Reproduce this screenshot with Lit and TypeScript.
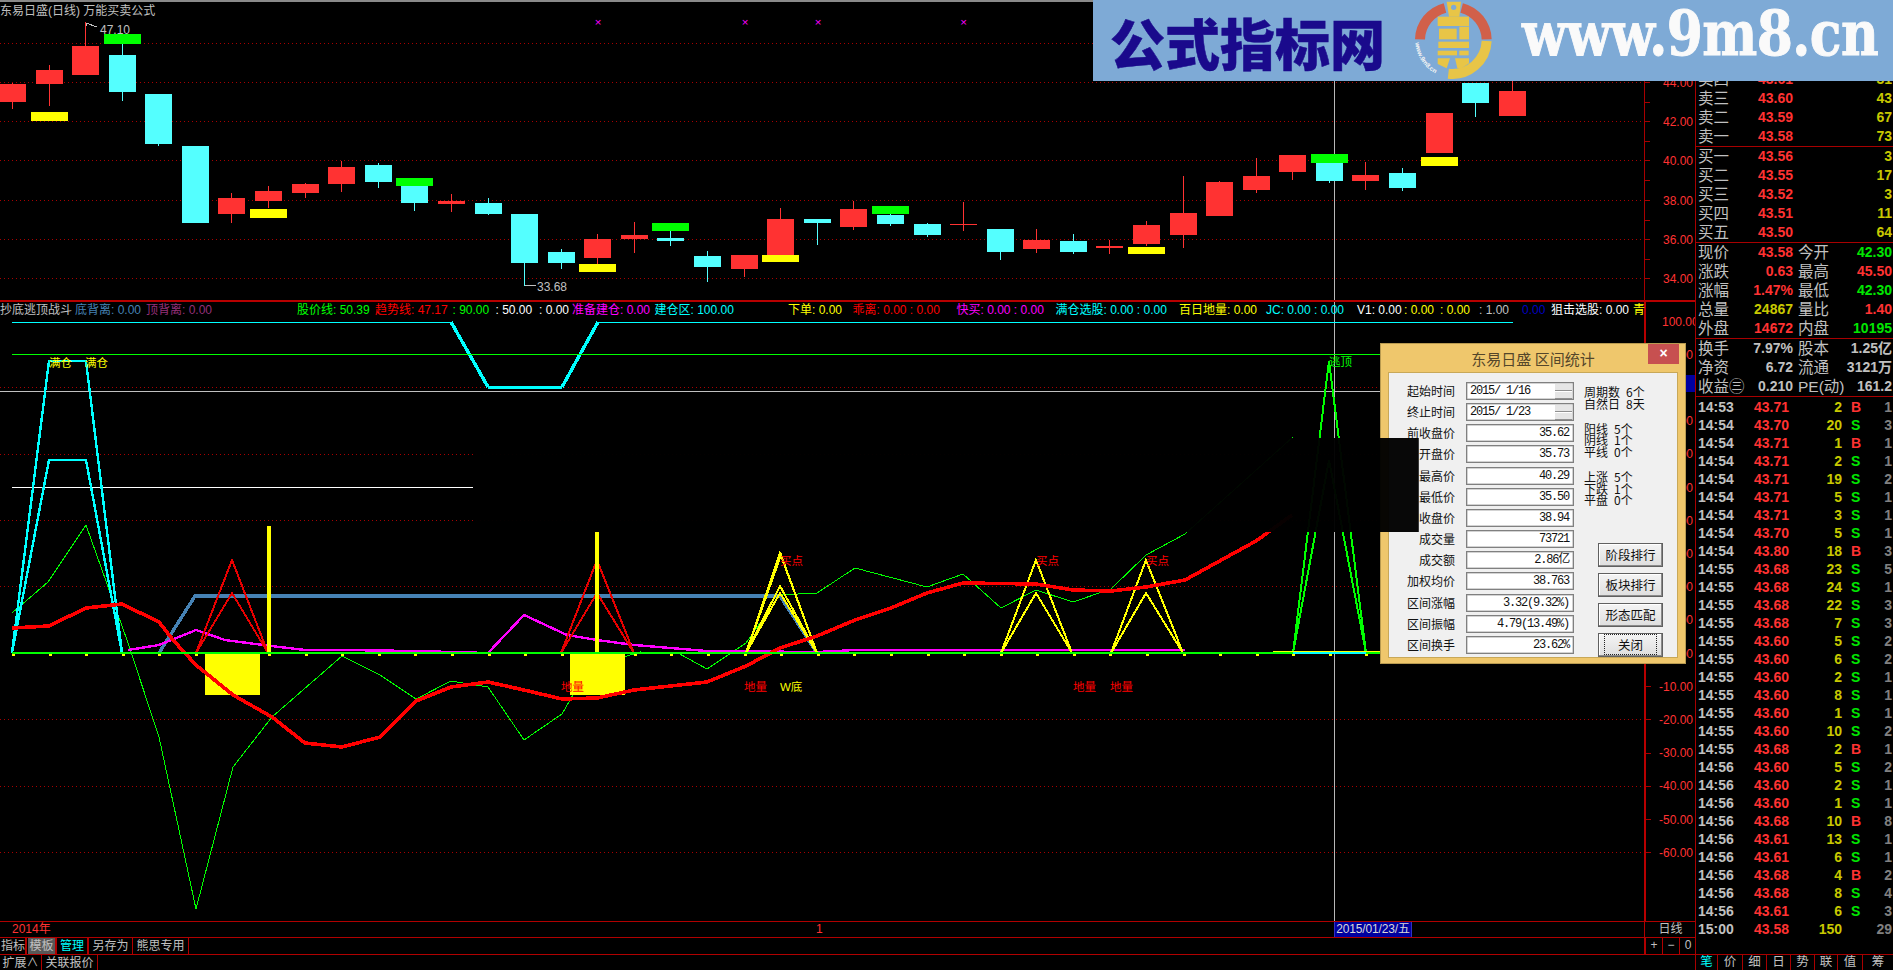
import { LitElement, html, css, svg } from "lit";
import { customElement } from "lit/decorators.js";

const RED = "#ff3232";
const CY = "#54ffff";
const YE = "#ffff00";
const GR = "#00ff00";
const px = (i: number) => Math.floor(12.5 + 36.58 * i) + 0.5;

// [index, wickTop, bodyTop, bodyBottom, wickBottom, up?]
const candles: [number, number, number, number, number, boolean][] = [
  [0, 83, 84, 102, 109, true], [1, 65, 70, 84, 106, true], [2, 22, 46, 75, 75, true],
  [3, 44, 55, 92, 101, false], [4, 94, 94, 144, 146, false], [5, 146, 146, 223, 223, false],
  [6, 193, 198, 214, 223, true], [7, 186, 191, 201, 208, true], [8, 183, 184, 193, 198, true],
  [9, 161, 167, 184, 192, true], [10, 163, 165, 182, 188, false], [11, 186, 186, 203, 211, false],
  [12, 194, 201, 204, 212, true], [13, 198, 203, 214, 215, false], [14, 214, 214, 263, 286, false],
  [15, 249, 252, 263, 269, false], [16, 234, 239, 258, 264, true], [17, 222, 235, 239, 253, true],
  [18, 231, 238, 241, 246, false], [19, 251, 256, 267, 282, false], [20, 255, 255, 269, 277, true],
  [21, 208, 219, 255, 255, true], [22, 219, 219, 223, 245, false], [23, 201, 209, 227, 230, true],
  [24, 214, 215, 224, 226, false], [25, 223, 224, 235, 237, false], [26, 202, 224, 225, 231, true],
  [27, 229, 229, 252, 260, false], [28, 229, 240, 249, 253, true], [29, 234, 241, 252, 254, false],
  [30, 240, 246, 248, 254, true], [31, 221, 225, 244, 246, true], [32, 176, 213, 235, 248, true],
  [33, 181, 182, 216, 216, true], [34, 158, 176, 190, 193, true], [35, 155, 155, 172, 180, true],
  [36, 163, 163, 181, 183, false], [37, 162, 175, 181, 190, true], [38, 168, 173, 188, 191, false],
  [39, 113, 113, 153, 153, true], [40, 83, 83, 103, 117, false], [41, 81, 91, 116, 116, true],
];
// [index, top, bottom, color]
const flags: [number, number, number, string][] = [
  [1, 112, 121, YE], [3, 34, 44, GR], [7, 209, 218, YE], [11, 178, 186, GR], [16, 264, 272, YE],
  [18, 223, 231, GR], [21, 255, 262, YE], [24, 206, 214, GR], [31, 247, 254, YE], [36, 154, 163, GR], [39, 157, 166, YE],
];
const legend: [number, string, string][] = [
  [0, "抄底逃顶战斗", "#c0c0c0"], [75, "底背离: 0.00", "#4682b4"], [146, "顶背离: 0.00", "#96307a"],
  [297, "股价线: 50.39", GR], [375, "趋势线: 47.17", "#ff0000"], [452.5, ": 90.00", GR], [495.5, ": 50.00", "#ffffff"],
  [539, ": 0.00", "#ffffff"], [572, "准备建仓: 0.00", "#ff00ff"], [654.5, "建仓区: 100.00", "#00ffff"],
  [788, "下单: 0.00", YE], [852.5, "乖离: 0.00 : 0.00", "#ff0000"], [956.5, "快买: 0.00 : 0.00", "#ff00ff"],
  [1055.5, "满仓选股: 0.00 : 0.00", "#00ffff"], [1179, "百日地量: 0.00", YE], [1266, "JC: 0.00 : 0.00", "#00ffff"],
  [1357, "V1: 0.00", "#ffffff"], [1404, ": 0.00", YE], [1440, ": 0.00", YE], [1479, ": 1.00", "#c0c0c0"],
  [1522, "0.00", "#0000c0"], [1551, "狙击选股: 0.00", "#ffffff"], [1633, "青", YE],
];
const marks: [number, number, string, string][] = [
  [49, 362, "满仓", YE], [85, 362, "满仓", YE], [1329, 361, "逃顶", GR],
  [780, 560, "买点", "#ff0000"], [1036, 560, "买点", "#ff0000"], [1146, 560, "买点", "#ff0000"],
  [561, 686, "地量", "#ff0000"], [744, 686, "地量", "#ff0000"], [780, 686, "W底", YE],
  [1073, 686, "地量", "#ff0000"], [1110, 686, "地量", "#ff0000"],
];
const redLine = "12,628 49,626 86,608 122,604 159,622 173,640 196,665 233,695 272,717 305,743 342,747 380,737 416,701 451,687 488,682 524,690 562,699 597,698 634,690 707,682 746,666 780,648 817,636 855,620 891,608 927,593 963,583 1036,584 1073,590 1111,591 1146,587 1185,580 1256,541 1292,515";
const thinGreen = "12,613 48,582 86,525 127,640 159,737 196,909 233,767 272,717 342,656 380,675 416,699 451,681 488,687 524,740 562,714 597,653 624,657 640,652 678,653 707,669 746,643 780,595 817,593 855,568 927,587 963,574 1001,608 1036,590 1073,602 1111,589 1146,555 1185,534 1293,437";
const magenta = "128,650 159,645 196,630 225,640 263,645 305,650 342,650 416,651 488,653 524,615 567,635 597,640 634,645 670,648 707,651 817,652 855,650 1185,650";
const tris: [number, number, number, number, string][] = [
  [196, 232, 268, 560, "#e80000"], [196, 232, 268, 593, "#e80000"], [561, 597, 634, 560, "#e80000"], [561, 597, 634, 593, "#e80000"],
  [746, 780, 817, 553, YE], [746, 781, 817, 555, YE], [746, 780, 817, 586, YE], [746, 780, 817, 593, YE],
  [1001, 1036, 1072, 560, YE], [1001, 1036, 1072, 593, YE], [1111, 1146, 1183, 560, YE], [1111, 1146, 1183, 593, YE],
  [1293, 1329, 1366, 361, GR], [1293, 1329, 1366, 460, GR],
];
const grids = [43.5, 82.5, 121.5, 160.5, 200.5, 239.5, 278.5];
const lowGrid = [387.5, 454.5, 520.5, 586.5, 719.5, 786.5, 852.5];

const book = [
  ["卖五", "43.65", "109"], ["卖四", "43.61", "31"], ["卖三", "43.60", "43"], ["卖二", "43.59", "67"], ["卖一", "43.58", "73"],
];
const bids = [
  ["买一", "43.56", "3"], ["买二", "43.55", "17"], ["买三", "43.52", "3"], ["买四", "43.51", "11"], ["买五", "43.50", "64"],
];
const stats = [
  ["现价", "43.58", "r", "今开", "42.30", "g"], ["涨跌", "0.63", "r", "最高", "45.50", "r"], ["涨幅", "1.47%", "r", "最低", "42.30", "g"],
  ["总量", "24867", "y", "量比", "1.40", "r"], ["外盘", "14672", "r", "内盘", "10195", "g"],
];
const funds = [
  ["换手", "7.97%", "w", "股本", "1.25亿", "w"], ["净资", "6.72", "w", "流通", "3121万", "w"], ["收益㊂", "0.210", "w", "PE(动)", "161.2", "w"],
];
const ticks = `14:53 43.71 2 B 1|14:54 43.70 20 S 3|14:54 43.71 1 B 1|14:54 43.71 2 S 1|14:54 43.71 19 S 2|14:54 43.71 5 S 1|14:54 43.71 3 S 1|14:54 43.70 5 S 1|14:54 43.80 18 B 3|14:55 43.68 23 S 5|14:55 43.68 24 S 1|14:55 43.68 22 S 3|14:55 43.68 7 S 3|14:55 43.60 5 S 2|14:55 43.60 6 S 2|14:55 43.60 2 S 1|14:55 43.60 8 S 1|14:55 43.60 1 S 1|14:55 43.60 10 S 2|14:55 43.68 2 B 1|14:56 43.60 5 S 2|14:56 43.60 2 S 1|14:56 43.60 1 S 1|14:56 43.68 10 B 8|14:56 43.61 13 S 1|14:56 43.61 6 S 1|14:56 43.68 4 B 2|14:56 43.68 8 S 4|14:56 43.61 6 S 3|15:00 43.58 150 _ 29`
  .split("|").map((r) => r.split(" "));
const tabs = ["笔", "价", "细", "日", "势", "联", "值", "筹"];
const formRows: [string, string, boolean][] = [
  ["起始时间", "2015/ 1/16", true], ["终止时间", "2015/ 1/23", true], ["前收盘价", "35.62", false], ["开盘价", "35.73", false],
  ["最高价", "40.29", false], ["最低价", "35.50", false], ["收盘价", "38.94", false], ["成交量", "73721", false],
  ["成交额", "2.86亿", false], ["加权均价", "38.763", false], ["区间涨幅", "3.32(9.32%)", false], ["区间振幅", "4.79(13.49%)", false], ["区间换手", "23.62%", false],
];

@customElement("app-root")
export class AppRoot extends LitElement {
  static styles = css`
    :host {
      display: block;
      position: relative;
      width: 1893px;
      height: 970px;
      overflow: hidden;
      background: #000;
      color: #c0c0c0;
      font-family: "Liberation Sans", "Noto Sans CJK SC", sans-serif;
      font-size: 12px;
    }
    .app { display: grid; grid-template-columns: 1696px 197px; height: 970px; }
    .left { display: flex; flex-direction: column; min-width: 0; }
    .chart { display: block; width: 1696px; height: 921px; }
    .chart text { font-family: "Liberation Sans", "Noto Sans CJK SC", sans-serif; font-size: 12px; }
    .chart .mark { font-size: 11.5px; }
    .row { display: flex; border-top: 1px solid #b00000; box-sizing: border-box; line-height: 15px; white-space: nowrap; }
    .dates { height: 16px; display: grid; grid-template-columns: 12px 804px 518px 78px 1fr 52px; color: #ff3232; }
    .dates .hl { background: #0000a0; border: 1px solid #3030c0; border-width: 0 1px; color: #d8d8d8; text-align: center; letter-spacing: -0.15px; }
    .dates .unit { border-left: 1px solid #b00000; color: #c0c0c0; text-align: center; font-size: 12px; }
    .tools { height: 17px; justify-content: space-between; }
    .tools .cells, .ext .cells { display: flex; }
    .tab { padding: 0 2px; border-right: 2px solid #b00000; font-size: 12px; line-height: 16px; }
    .t1 { width: 24px; padding: 0 0 0 1px; }
    .t2 { width: 27px; padding: 0 0; background: #585858; margin-left: 1px; text-align: center; }
    .t3 { width: 30px; padding: 0; text-align: center; color: #00ffff; }
    .t4 { width: 43px; padding: 0; text-align: center; border-right-width: 1px; }
    .t5 { width: 55px; padding: 0; text-align: center; border-right-width: 1px; }
    .pm { display: flex; border-left: 2px solid #b00000; width: 52px; box-sizing: border-box; }
    .pm span { flex: 1; text-align: center; border-right: 1px solid #b00000; }
    .pm span:last-child { border-right: 0; }
    .ext { height: 16px; }
    .ext .tab { border-right-width: 1px; padding: 0; text-align: center; }
    .e1 { width: 41px; }
    .e2 { width: 55px; }

    .side { border-left: 1px solid #a80000; display: flex; flex-direction: column; padding-top: 51px; box-sizing: border-box; height: 970px; margin-left: -1px; }
    .q3, .q4 { display: grid; height: 19px; line-height: 19px; padding: 0 1px 0 2px; white-space: nowrap; font-weight: bold; font-size: 14px; }
    .q3 { grid-template-columns: 40px 55px 1fr; }
    .q4 { grid-template-columns: 40px 55px 40px 1fr; }
    .lb { font-weight: normal; font-size: 15.5px; color: #c0c0c0; letter-spacing: 0; }
    .lb2 { padding-left: 5px; }
    .num { text-align: right; }
    .sec { border-bottom: 1px solid #a80000; }
    .r { color: #ff3232; } .g { color: #00e600; } .y { color: #c8c800; } .w { color: #c0c0c0; } .d { color: #808080; }
    .trades { flex: 1; padding-top: 1px; }
    .tr { display: grid; grid-template-columns: 56px 40px 48px 30px 1fr; height: 18px; line-height: 18px; padding: 0 1px 0 2px; font-size: 14px; font-weight: bold; }
    .tr .bs { padding-left: 9px; }
    .tabs { display: grid; grid-template-columns: 22px 25px 24px 24px 24px 23px 25px 1fr; border-top: 1px solid #a80000; height: 15px; line-height: 15px; text-align: center; font-size: 12.5px; }
    .tabs span { border-right: 1px solid #a80000; }
    .tabs span:first-child { color: #00ffff; }
    .tabs span:last-child { border-right: 0; }

    .banner { position: absolute; left: 1093px; top: 0; width: 800px; height: 81px; background: #7eaad6; display: flex; align-items: center; overflow: hidden; }
    .banner .cn { color: #1a0a8c; font-family: "Noto Sans CJK SC", sans-serif; font-weight: 900; font-size: 55px; line-height: 76px; margin-left: 17px; width: 290px; flex: none; white-space: nowrap; -webkit-text-stroke: 0.5px #1a0a8c; }
    .banner .logo { width: 110px; height: 81px; flex: none; align-self: flex-start; }
    .banner .url { color: #fafafa; font-family: "DejaVu Serif", serif; font-weight: bold; font-size: 52px; line-height: 60px; margin-left: 12px; letter-spacing: -0.6px; white-space: nowrap; transform: scaleY(1.17); transform-origin: 0 48px; -webkit-text-stroke: 0.8px #fafafa; align-self: flex-start; margin-top: 7px; }

    .dialog { position: absolute; left: 1380px; top: 343px; width: 306px; height: 321px; box-sizing: border-box; background: #efc76c; border: 1px solid #b89a50; color: #111; font-family: "Noto Sans CJK SC", sans-serif; display: flex; flex-direction: column; }
    .title { height: 28px; line-height: 29px; text-align: center; font-size: 15px; color: #54462a; position: relative; flex: none; }
    .close { position: absolute; top: 0; right: 6px; width: 31px; height: 20px; background: #c75050; color: #fff; font-size: 14px; line-height: 19px; font-weight: bold; font-family: "Liberation Sans", sans-serif; }
    .inner { margin: 0 7px; height: 286px; box-sizing: border-box; background: #f0f0f0; border: 1px solid #c8a858; display: flex; padding: 9px 0 0 0; }
    .form { display: grid; grid-template-columns: 66px 108px; column-gap: 11px; row-gap: 3.17px; grid-auto-rows: 18px; align-content: start; }
    .form label { text-align: right; font-size: 12px; line-height: 18px; white-space: nowrap; }
    .input { box-sizing: border-box; border: 1px solid #808080; box-shadow: inset 0 0 0 0.5px #a8a8a8; background: #fff; font-family: "Liberation Mono", "Noto Sans CJK SC", monospace; font-size: 12px; letter-spacing: -1.2px; line-height: 16px; text-align: right; padding-right: 4px; white-space: pre; display: flex; justify-content: flex-end; }
    .input.date { justify-content: space-between; padding: 0 1px 0 3px; }
    .spin { display: flex; flex-direction: column; gap: 1px; width: 17px; margin-top: 1px; }
    .spin i { height: 6px; background: #e6e6e6; border-bottom: 1px solid #909090; }
    .rcol { margin: 4px 0 0 10px; font-size: 12px; }
    .grp { margin-bottom: 13.5px; }
    .grp div { display: grid; height: 11.6px; line-height: 12px; white-space: nowrap; }
    .g3 div { grid-template-columns: 42px 1fr; }
    .g2 div { grid-template-columns: 30px 1fr; }
    .btns { display: flex; flex-direction: column; gap: 6px; margin: 37px 0 0 14px; }
    .btn { box-sizing: border-box; width: 65px; height: 24px; border: 1px solid #606060; box-shadow: inset -1px -1px 0 #8a8a8a, inset 1px 1px 0 #fff; background: linear-gradient(#f4f4f4, #dedede); text-align: center; line-height: 22px; font-size: 12.5px; }
    .btn.focus span { outline: 1px dotted #222; padding: 0 13px; }
    .mask { position: absolute; left: 473px; top: 438px; width: 946px; height: 94px; background: rgba(0, 0, 0, 0.97); border-right: 1px solid #3a3a3a; box-sizing: border-box; }
  `;

  private chart() {
    const tri = tris.map(([a, b, c, y, col]) =>
      svg`<polyline points="${a},653 ${b},${y} ${c},653" fill="none" stroke="${col}" stroke-width="2"/>`);
    const axisUp = [44, 42, 40, 38, 36, 34];
    const axisLow = [90, 80, 70, 60, 50, 40, 30, 20, 10, 0, -10, -20, -30, -40, -50, -60];
    return html`<svg class="chart" viewBox="0 0 1696 921" shape-rendering="crispEdges">
      <rect x="0" y="0" width="1696" height="2" fill="#8a8a8a"/>
      ${grids.map((y) => svg`<line x1="0" x2="1644" y1="${y}" y2="${y}" stroke="#a80000" stroke-dasharray="1 3"/>`)}
      ${lowGrid.map((y) => svg`<line x1="0" x2="1644" y1="${y}" y2="${y}" stroke="#a80000" stroke-dasharray="1 3"/>`)}
      <line x1="1334.5" x2="1334.5" y1="81" y2="921" stroke="#b8b8b8"/>
      <line x1="0" x2="1644" y1="391.5" y2="391.5" stroke="#c0c0c0"/>
      ${candles.map(([i, wt, bt, bb, wb, up]) => {
        const c = up ? RED : CY;
        const x = px(i);
        return svg`<line x1="${x}" x2="${x}" y1="${wt}" y2="${wb}" stroke="${c}"/>
          <rect x="${x - 13.5}" y="${bt}" width="27" height="${Math.max(bb - bt, 1)}" fill="${c}"/>`;
      })}
      ${flags.map(([i, t, b, c]) => svg`<rect x="${px(i) - 18.5}" y="${t}" width="37" height="${b - t}" fill="${c}"/>`)}
      ${[598, 745, 818, 963.5].map((x) => svg`<text x="${x}" y="26" fill="#ff00ff" text-anchor="middle" class="mark">×</text>`)}
      <polyline points="89,24 86,23 86,26" stroke="#c0c0c0" fill="none"/>
      <line x1="86" y1="23" x2="97" y2="27" stroke="#c0c0c0"/>
      <text x="100" y="34" fill="#c0c0c0">47.10</text>
      <line x1="525" x2="536" y1="285.5" y2="285.5" stroke="#c0c0c0"/>
      <text x="537" y="291" fill="#c0c0c0">33.68</text>
      <text x="0" y="15" fill="#c0c0c0">东易日盛(日线) 万能买卖公式</text>

      <line x1="0" x2="1696" y1="301" y2="301" stroke="#b80000" stroke-width="2"/>
      <line x1="1644.5" x2="1644.5" y1="0" y2="301" stroke="#a80000"/>
      <rect x="1644" y="301" width="2" height="620" fill="#b80000"/>
      ${axisUp.map((v, k) => svg`<text x="1693" y="${[87, 126, 165, 205, 244, 283][k]}" fill="${RED}" text-anchor="end">${v.toFixed(2)}</text>`)}
      ${[82, 102, 121, 141, 160, 180, 200, 220, 239, 259, 278].map((y) => svg`<rect x="1645" y="${y}" width="5" height="1" fill="#a80000"/>`)}
      ${legend.map(([x, t, c]) => svg`<text x="${x}" y="314" fill="${c}">${t}</text>`)}

      <text x="1662" y="326" fill="${RED}">100.00</text>
      ${axisLow.map((v) => svg`<text x="1693" y="${653 - 3.32 * v + 4.5}" fill="${RED}" text-anchor="end">${v.toFixed(2)}</text>`)}
      ${axisLow.map((v) => svg`<rect x="1646" y="${Math.round(653 - 3.32 * v)}" width="5" height="1" fill="#a80000"/>`)}
      <rect x="1646" y="375" width="49" height="17" fill="#0000a0"/>

      <line x1="12" x2="451" y1="322.5" y2="322.5" stroke="#00ffff"/>
      <polyline points="451,322 488,387" stroke="#00ffff" stroke-width="3.4" fill="none"/>
      <polyline points="488,387 562,387" stroke="#00ffff" stroke-width="3" fill="none"/>
      <polyline points="562,387 598,322" stroke="#00ffff" stroke-width="3.4" fill="none"/>
      <line x1="598" x2="1513" y1="322.5" y2="322.5" stroke="#00ffff"/>
      <line x1="12" x2="1513" y1="354.5" y2="354.5" stroke="${GR}"/>
      <line x1="12" x2="473" y1="487.5" y2="487.5" stroke="#fff"/>

      <polyline points="${thinGreen}" stroke="${GR}" stroke-width="1" fill="none"/>
      <polyline points="12,653 49,361 86,361 122,653" stroke="#00ffff" stroke-width="2.4" fill="none"/>
      <polyline points="12,653 49,460 86,460 122,653" stroke="#00ffff" stroke-width="2.4" fill="none"/>
      <polyline points="159,653 195,596 780,596 817,653" stroke="#4682b4" stroke-width="3.4" fill="none"/>
      <polyline points="${magenta}" stroke="#ff00ff" stroke-width="2.4" fill="none"/>
      ${tri}
      <rect x="266.5" y="526" width="4" height="127" fill="${YE}"/>
      <rect x="595" y="532" width="4" height="121" fill="${YE}"/>
      <rect x="205" y="654" width="55" height="41" fill="${YE}"/>
      <rect x="570" y="654" width="55" height="41" fill="${YE}"/>
      <polyline points="${redLine}" stroke="#ff0000" stroke-width="3.6" fill="none" stroke-linejoin="round"/>
      <line x1="1273" x2="1400" y1="651" y2="651" stroke="${YE}"/>
      <line x1="12" x2="1400" y1="653" y2="653" stroke="${GR}" stroke-width="2.4"/>
      <line x1="1293" x2="1366" y1="653" y2="653" stroke="#00ffff" stroke-width="2"/>
      ${Array.from({ length: 38 }, (_, i) => svg`<rect x="${px(i) - 1}" y="654" width="3" height="1.5" fill="${YE}"/>`)}
      ${marks.map(([x, y, t, c]) => svg`<text class="mark" x="${x}" y="${y + 4.5}" fill="${c}">${t}</text>`)}
    </svg>`;
  }

  private logo() {
    return html`<svg class="logo" viewBox="0 0 330 243">
      <defs><path id="ring" d="M46 128 A115 115 0 0 0 138 232"/></defs>
      <path d="M60 118 A100 100 0 0 1 135 24" fill="none" stroke="#d1604a" stroke-width="30"/>
      <path d="M185 24 A100 100 0 0 1 260 118" fill="none" stroke="#d1604a" stroke-width="30"/>
      <path d="M260 123 A103 103 0 0 1 145 221" fill="none" stroke="#e8c547" stroke-width="30"/>
      <path d="M140 5H183L178 50H147Z" fill="#e8c547"/>
      <circle cx="161" cy="22" r="8" fill="#7eaad6"/>
      <rect x="113" y="50" width="94" height="28" fill="#e8c547"/>
      <rect x="117" y="86" width="53" height="32" fill="#e8c547"/>
      <rect x="178" y="80" width="29" height="38" fill="#e8c547"/>
      <rect x="115" y="125" width="92" height="19" fill="#e8c547"/>
      <rect x="113" y="152" width="58" height="14" fill="#e8c547"/>
      <rect x="178" y="152" width="28" height="14" fill="#e8c547"/>
      <path d="M113 175H150L140 205L113 192Z" fill="#e8c547"/>
      <path d="M165 175H207V190L185 205H172Z" fill="#e8c547"/>
      <text fill="#f4f4f4" font-size="19" font-weight="bold" font-family="Liberation Sans"><textPath href="#ring">www.9m8.cn</textPath></text>
    </svg>`;
  }

  private dialog() {
    return html`<div class="dialog">
      <div class="title">东易日盛 区间统计<div class="close">×</div></div>
      <div class="inner">
        <div class="form">
          ${formRows.map(([l, v, d]) => html`<label>${l}</label>
            <div class="input ${d ? "date" : ""}"><span>${v}</span>${d ? html`<div class="spin"><i></i><i></i></div>` : ""}</div>`)}
        </div>
        <div class="rcol">
          <div class="grp g3"><div><span>周期数</span><span>6个</span></div><div><span>自然日</span><span>8天</span></div></div>
          <div class="grp g2"><div><span>阳线</span><span>5个</span></div><div><span>阴线</span><span>1个</span></div><div><span>平线</span><span>0个</span></div></div>
          <div class="grp g2"><div><span>上涨</span><span>5个</span></div><div><span>下跌</span><span>1个</span></div><div><span>平盘</span><span>0个</span></div></div>
          <div class="btns">
            <div class="btn">阶段排行</div><div class="btn">板块排行</div><div class="btn">形态匹配</div>
            <div class="btn focus"><span>关闭</span></div>
          </div>
        </div>
      </div>
    </div>`;
  }

  render() {
    return html`<div class="app">
        <div class="left">
          ${this.chart()}
          <div class="row dates"><span></span><span>2014年</span><span>1</span><span class="hl">2015/01/23/五</span><span></span><span class="unit">日线</span></div>
          <div class="row tools">
            <div class="cells">
              <span class="tab t1">指标</span><span class="tab t2">模板</span><span class="tab t3">管理</span><span class="tab t4">另存为</span><span class="tab t5">熊思专用</span>
            </div>
            <div class="pm"><span>+</span><span>−</span><span>0</span></div>
          </div>
          <div class="row ext">
            <div class="cells"><span class="tab e1">扩展∧</span><span class="tab e2">关联报价</span></div>
          </div>
        </div>
        <div class="side">
          <div class="sec">${book.map(([a, b, c]) => html`<div class="q3"><span class="lb">${a}</span><span class="num r">${b}</span><span class="num y">${c}</span></div>`)}</div>
          <div class="sec">${bids.map(([a, b, c]) => html`<div class="q3"><span class="lb">${a}</span><span class="num r">${b}</span><span class="num y">${c}</span></div>`)}</div>
          <div class="sec">${stats.map(([a, b, bc, d, e, ec]) => html`<div class="q4"><span class="lb">${a}</span><span class="num ${bc}">${b}</span><span class="lb lb2">${d}</span><span class="num ${ec}">${e}</span></div>`)}</div>
          <div class="sec fund">${funds.map(([a, b, bc, d, e, ec]) => html`<div class="q4"><span class="lb">${a}</span><span class="num ${bc}">${b}</span><span class="lb lb2">${d}</span><span class="num ${ec}">${e}</span></div>`)}</div>
          <div class="trades">
            ${ticks.map(([t, p, v, s, n]) => html`<div class="tr"><span class="w">${t}</span><span class="r">${p}</span><span class="num y">${v}</span><span class="bs ${s === "B" ? "r" : "g"}">${s === "_" ? "" : s}</span><span class="num d">${n}</span></div>`)}
          </div>
          <div class="tabs">${tabs.map((t) => html`<span>${t}</span>`)}</div>
        </div>
      </div>
      <div class="banner">
        <div class="cn">公式指标网</div>
        ${this.logo()}
        <div class="url">www.9m8.cn</div>
      </div>
      ${this.dialog()}
      <div class="mask"></div>`;
  }
}
